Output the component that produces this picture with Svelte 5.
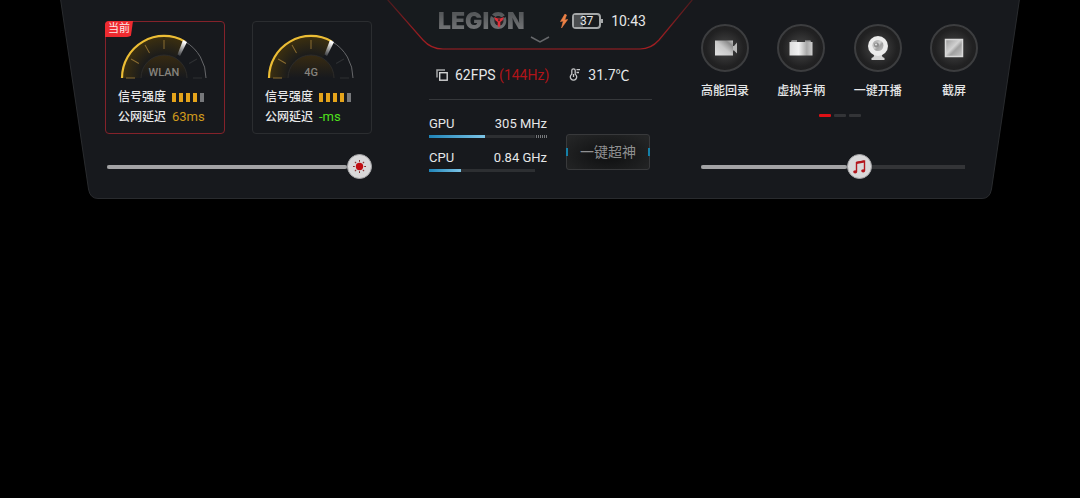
<script>
  let brightness = $state(100);
  let volume = $state(61);
  let page = $state(0);
  let current = $state(0);

  const networks = [
    { name: "WLAN", bars: 4, delay: "63ms", color: "#cf9a1c" },
    { name: "4G", bars: 4, delay: "-ms", color: "#4fe01c" },
  ];

  const meters = [
    { name: "GPU", value: "305 MHz", percent: 53, peak: true },
    { name: "CPU", value: "0.84 GHz", percent: 30, peak: false },
  ];

  const tools = [
    { label: "高能回录", icon: "camera" },
    { label: "虚拟手柄", icon: "gamepad" },
    { label: "一键开播", icon: "webcam" },
    { label: "截屏", icon: "shot" },
  ];

  // the thumb is 25px wide, so its travel is the track minus 25px
  function thumbLeft(value) {
    return `calc(${value}% - ${value / 4}px)`;
  }
</script>

<main class="panel">
  <svg class="shape" viewBox="0 0 960 199" preserveAspectRatio="none" aria-hidden="true">
    <defs>
      <linearGradient id="notchLine" x1="0" y1="0" x2="0" y2="1">
        <stop offset="0" stop-color="#4a1a1d" />
        <stop offset="0.6" stop-color="#8e1c20" />
        <stop offset="1" stop-color="#a61e22" />
      </linearGradient>
    </defs>
    <path d="M0.5 -1 L28.5 189 Q30 198.5 38 198.5 H922 Q930 198.5 931.5 189 L959.5 -1 Z" fill="#17191d" stroke="#292b2e" />
    <path d="M327 -1 L365 41 Q373 49.500 384 49.500 H583 Q594 49.500 602 41 L633 -1 Z" fill="#171b1e" />
    <path d="M327 -1 L363 40 Q371 49 383 49 H580 Q591 49 599 40 L633 -1" fill="none" stroke="url(#notchLine)" stroke-width="1.2" />
  </svg>

  <section class="left">
    <div class="cards">
      {#each networks as net, i}
        <button class="card" class:active={current === i} onclick={() => (current = i)}>
          {#if current === i}
            <span class="badge">当前</span>
          {/if}
          <svg class="gauge" viewBox="0 0 88 45" width="88" height="45">
            <defs>
              <radialGradient id="glow{i}" gradientUnits="userSpaceOnUse" cx="44" cy="44" r="42">
                <stop offset="0.5" stop-color="#17191d" />
                <stop offset="1" stop-color="#3d300f" />
              </radialGradient>
              <linearGradient id="dome{i}" x1="0" y1="0" x2="0" y2="1">
                <stop offset="0" stop-color="#382b12" />
                <stop offset="1" stop-color="#17191d" />
              </linearGradient>
              <linearGradient id="needle{i}" x1="0" y1="1" x2="0.4" y2="0">
                <stop offset="0" stop-color="#fff" stop-opacity="0.1" />
                <stop offset="1" stop-color="#fff" />
              </linearGradient>
            </defs>
            <path d="M2 44 A42 42 0 0 1 65 7.600 L44 44 Z" fill="url(#glow{i})" />
            <path d="M21 44 A23 23 0 0 1 67 44 Z" fill="url(#dome{i})" />
            <path d="M21 44 A23 23 0 0 1 67 44" fill="none" stroke="#2c2b29" />
            <path d="M65 7.600 A42 42 0 0 1 86 44" fill="none" stroke="#66676a" />
            {#each [0, 30, 60, 90, 150, 180] as angle}
              <line x1="6" y1="44" x2="15" y2="44" transform="rotate({angle} 44 44)" stroke={angle > 90 ? "#2e3033" : "#8a6c30"} />
            {/each}
            <path d="M2 44 A42 42 0 0 1 65 7.600" fill="none" stroke="#ecbd35" stroke-width="2.200" />
            <path d="M63 6 L67 8 L60 22 L57.500 20.500 Z" fill="url(#needle{i})" />
            <text x="44" y="42" text-anchor="middle">{net.name}</text>
          </svg>
          <span class="row">
            <span class="key">信号强度</span>
            <span class="bars">
              {#each [0, 1, 2, 3, 4] as n}
                <i class:on={n < net.bars}></i>
              {/each}
            </span>
          </span>
          <span class="row"><span class="key">公网延迟</span><span style:color={net.color}>{net.delay}</span></span>
        </button>
      {/each}
    </div>

    <div class="slider bright">
      <input type="range" min="0" max="100" aria-label="亮度" bind:value={brightness} />
      <span class="fill" style:width={thumbLeft(brightness)}></span>
      <svg class="knob" style:left={thumbLeft(brightness)} viewBox="0 0 25 25" width="25" height="25">
        <circle cx="12.5" cy="12.5" r="12" fill="#d9d8d9" stroke="#a2a2a4" />
        <circle cx="12.5" cy="12.5" r="3.700" fill="#c00d12" />
        {#each [0, 45, 90, 135, 180, 225, 270, 315] as angle}
          <line x1="12.5" y1="6" x2="12.5" y2="7.800" transform="rotate({angle} 12.5 12.5)" stroke="#8c2a2c" />
        {/each}
      </svg>
    </div>
  </section>

  <section class="center">
    <header>
      <h1 class="logo">
        LEGION
        <svg viewBox="0 0 18 18" width="18" height="18" aria-hidden="true">
          <circle cx="9" cy="9" r="4.500" fill="#2a2325" />
          <path d="M1 3 L9 8 L17 3" fill="none" stroke="#171b1e" stroke-width="1.500" />
          <path d="M4 5 L8 6.500 H10 L14 5 L12.500 8.500 L10.300 10 V14 L9 15.500 L7.700 14 V10 L5.500 8.500 Z" fill="#e0303a" />
          <path d="M7.800 7.500 L9 9.500 L10.200 7.500 Z" fill="#171b1e" />
        </svg>
      </h1>
      <svg class="bolt" viewBox="0 0 8 14" width="8" height="14">
        <path d="M5 0 L0.500 7.500 L3.300 7 L1.500 14 L7.700 5.500 L4.700 6 L6.500 1 Z" fill="#ee8246" stroke="#ee8246" stroke-width="0.600" />
      </svg>
      <span class="battery"><span class="level"></span><b>37</b></span>
      <time>10:43</time>
      <button class="fold" aria-label="收起">
        <svg viewBox="0 0 20 8" width="20" height="8">
          <path d="M1 1 L10 6 L19 1" fill="none" stroke="#66686b" stroke-width="1.500" />
        </svg>
      </button>
    </header>

    <div class="stats">
      <svg viewBox="0 0 12 12" width="12" height="12">
        <path d="M1 8.500 V1 H9" fill="none" stroke="#a5a6a8" stroke-width="1.500" />
        <rect x="3.700" y="3.700" width="7.500" height="7.500" fill="none" stroke="#d2d3d4" stroke-width="1.400" />
      </svg>
      <span>62FPS <em>(144Hz)</em></span>
      <svg class="temp" viewBox="0 0 12 13" width="12" height="13">
        <path d="M2.800 6.200 V2.500 A1.700 1.700 0 0 1 6.200 2.500 V6.200 A3.200 3.200 0 1 1 2.800 6.200 Z" fill="none" stroke="#c5c6c8" stroke-width="1.300" />
        <path d="M4.500 6 V9 M7.500 1.700 H11 M7.500 4.500 H10" fill="none" stroke="#c5c6c8" stroke-width="1.300" />
      </svg>
      <span>31.7℃</span>
    </div>

    <div class="load">
      <div class="meters">
        {#each meters as m}
          <div class="meter">
            <div class="names"><span>{m.name}</span><span>{m.value}</span></div>
            <div class="line">
              <div class="track"><div style:width="{m.percent}%"></div></div>
              <div class="ticks" class:peak={m.peak}></div>
            </div>
          </div>
        {/each}
      </div>
      <button class="boost">一键超神</button>
    </div>
  </section>

  <section class="right">
    <svg class="defs" width="0" height="0" aria-hidden="true">
      <defs>
        <linearGradient id="metal" x1="0" y1="1" x2="1" y2="0">
          <stop offset="0" stop-color="#e2e2e2" />
          <stop offset="0.500" stop-color="#c8c8c8" />
          <stop offset="0.800" stop-color="#8c8c8c" />
          <stop offset="1" stop-color="#c8c8c8" />
        </linearGradient>
        <linearGradient id="pad" x1="0" y1="0" x2="1" y2="0">
          <stop offset="0" stop-color="#dcdcdc" />
          <stop offset="0.400" stop-color="#f2f2f2" />
          <stop offset="0.750" stop-color="#a8a8a8" />
          <stop offset="1" stop-color="#cfcfcf" />
        </linearGradient>
        <linearGradient id="glass" x1="0" y1="0" x2="1" y2="1">
          <stop offset="0" stop-color="#989898" />
          <stop offset="0.450" stop-color="#d2d2d2" />
          <stop offset="0.600" stop-color="#a0a0a0" />
          <stop offset="1" stop-color="#c6c6c6" />
        </linearGradient>
      </defs>
    </svg>
    <div class="tools">
      {#each tools as tool}
        <button class="tool">
          <span class="disc">
            <svg viewBox="0 0 24 24" width="24" height="24">
              {#if tool.icon === "camera"}
                <rect x="2" y="4.500" width="18" height="15" fill="url(#metal)" />
                <path d="M20 10 H21 L24.500 6 V18 L21 14.500 H20 Z" fill="#b9b9b9" />
              {:else if tool.icon === "gamepad"}
                <path d="M1 6 H2.500 V4.500 H8 V6 H16 V4.500 H21.500 V6 H23.500 V19.500 H0.500 V6 Z" fill="url(#pad)" />
                <path d="M2.500 5.500 H8 M16 5.500 H21.500" stroke="#9a9a9a" />
              {:else if tool.icon === "webcam"}
                <path d="M8.500 18 H15.500 L16.500 21 L18.500 22 V24 H5.500 V22 L7.500 21 Z" fill="#d4d4d4" />
                <circle cx="12" cy="10" r="10" fill="#ececec" />
                <circle cx="12" cy="9.500" r="5.500" fill="url(#glass)" />
                <circle cx="10.500" cy="9" r="2.500" fill="#8e8e8e" />
                <circle cx="10" cy="8.500" r="1" fill="#e4e4e4" />
              {:else}
                <rect x="3.500" y="3.500" width="17" height="17" fill="url(#glass)" stroke="#d9d9d9" stroke-width="1.500" />
              {/if}
            </svg>
          </span>
          <span class="label">{tool.label}</span>
        </button>
      {/each}
    </div>

    <div class="pager">
      {#each [0, 1, 2] as n}
        <button class:on={page === n} aria-label="第{n + 1}页" onclick={() => (page = n)}></button>
      {/each}
    </div>

    <div class="slider sound">
      <input type="range" min="0" max="100" aria-label="音量" bind:value={volume} />
      <span class="fill" style:width={thumbLeft(volume)}></span>
      <svg class="knob" style:left={thumbLeft(volume)} viewBox="0 0 25 25" width="25" height="25">
        <circle cx="12.5" cy="12.5" r="12" fill="#d9d8d9" stroke="#a2a2a4" />
        <path d="M9.500 17.500 V8.500 L17.500 7 V16.500" fill="none" stroke="#b3151c" stroke-width="1.400" />
        <path d="M9.500 8.800 L17.500 7.300" stroke="#b3151c" stroke-width="2.200" />
        <ellipse cx="8.200" cy="17.800" rx="2" ry="1.600" fill="#b3151c" />
        <ellipse cx="16.200" cy="16.800" rx="2" ry="1.600" fill="#b3151c" />
      </svg>
    </div>
  </section>
</main>

<style>
  :global(body) {
    background: #000;
  }

  .panel {
    position: relative;
    display: grid;
    grid-template-columns: 267fr 231fr 277fr;
    column-gap: 49px;
    box-sizing: border-box;
    margin: 0 60px;
    padding: 0 42px 20px 45px;
    color: #e6e7e8;
    font-family: Roboto, "Noto Sans CJK SC", sans-serif;
    font-size: 13px;
    line-height: 20px;
  }

  .shape {
    position: absolute;
    top: 0;
    left: 0;
    width: 100%;
    height: 100%;
  }

  section {
    position: relative;
  }

  button {
    margin: 0;
    padding: 0;
    border: none;
    background: none;
    color: inherit;
    font: inherit;
    cursor: pointer;
  }

  svg {
    display: block;
    flex: none;
  }

  .left {
    padding-top: 21px;
  }

  .cards {
    display: flex;
    justify-content: space-between;
  }

  .card {
    position: relative;
    box-sizing: border-box;
    width: 120px;
    padding: 12px 0 6px 12px;
    border: 1px solid #2b2d30;
    border-radius: 4px;
    text-align: left;
  }

  .card.active {
    border-color: #84222a;
  }

  .badge {
    position: absolute;
    top: -1px;
    left: -1px;
    width: 28px;
    border-radius: 4px 0 6px 0;
    background: #ee2b30;
    clip-path: polygon(0 0, 100% 0, 92% 100%, 0 100%);
    color: #fbe9e9;
    font-size: 11px;
    line-height: 16px;
    text-indent: 3px;
  }

  .gauge {
    margin: 0 0 8px 2px;
  }

  .gauge text {
    fill: #85837e;
    font-size: 11px;
    font-weight: 500;
  }

  .row {
    display: flex;
    align-items: center;
    gap: 5px;
    white-space: nowrap;
  }

  .key,
  .label {
    font-size: 12px;
    font-weight: 500;
  }

  .key {
    width: 49px;
  }

  .bars {
    display: flex;
    gap: 3px;
  }

  .bars i {
    width: 4px;
    height: 9px;
    background: #77787b;
  }

  .bars i.on {
    background: #e5a41b;
  }

  .slider {
    position: relative;
    height: 25px;
  }

  .bright {
    margin-top: 20px;
    margin-left: 2px;
  }

  .sound {
    margin-top: 37px;
    margin-right: 13px;
  }

  .slider input {
    display: block;
    width: 100%;
    height: 25px;
    margin: 0;
    appearance: none;
    background: linear-gradient(#333437, #333437) center / 100% 4px no-repeat;
    cursor: pointer;
  }

  .slider input::-webkit-slider-thumb {
    appearance: none;
    width: 25px;
    height: 25px;
    background: transparent;
  }

  .fill {
    position: absolute;
    top: 11px;
    left: 0;
    height: 4px;
    border-radius: 2px;
    background: #a3a3a5;
    pointer-events: none;
  }

  .knob {
    position: absolute;
    top: 0;
    pointer-events: none;
  }

  .center {
    padding-left: 8px;
  }

  header {
    position: relative;
    display: flex;
    align-items: center;
    box-sizing: border-box;
    height: 50px;
    padding: 0 6px 8px 9px;
  }

  .logo {
    position: relative;
    margin: 0 auto 0 0;
    background: linear-gradient(#55585a 20%, #707274 80%);
    background-clip: text;
    color: transparent;
    font-family: Inter, "Open Sans", sans-serif;
    font-size: 23px;
    font-weight: 900;
    line-height: 24px;
  }

  .logo svg {
    position: absolute;
    top: 3px;
    right: 17px;
  }

  .battery {
    position: relative;
    box-sizing: border-box;
    width: 29px;
    height: 16px;
    margin: 0 10px 0 4px;
    border: 2px solid #a4a7a8;
    border-radius: 4px;
    line-height: 12px;
    text-align: center;
  }

  .battery::after {
    content: "";
    position: absolute;
    top: 4px;
    right: -4px;
    width: 2px;
    height: 4px;
    background: #a4a7a8;
  }

  .battery b {
    position: relative;
    font-size: 12px;
    font-weight: 400;
  }

  .level {
    position: absolute;
    top: 0;
    bottom: 0;
    left: 0;
    width: 37%;
    background: #4b4e50;
  }

  time,
  .stats {
    font-size: 14px;
  }

  .fold {
    position: absolute;
    bottom: 6px;
    left: 101px;
  }

  .stats {
    display: flex;
    align-items: center;
    gap: 7px;
    height: 49px;
    padding-left: 7px;
    border-bottom: 1px solid #36383b;
    white-space: nowrap;
  }

  .stats em {
    color: #b01419;
    font-style: normal;
  }

  .temp {
    margin-left: 13px;
  }

  .load {
    display: flex;
    align-items: flex-end;
    gap: 19px;
    padding: 16px 2px 0 0;
  }

  .meters {
    flex: 1;
    display: flex;
    flex-direction: column;
    gap: 12px;
  }

  .names {
    display: flex;
    justify-content: space-between;
    line-height: 16px;
    white-space: nowrap;
  }

  .line {
    display: flex;
    gap: 1px;
    height: 3px;
    margin-top: 3px;
  }

  .track {
    flex: 1;
    background: #2d2f32;
  }

  .track div {
    height: 100%;
    background: linear-gradient(90deg, #1f84b8, #7cc4e6);
  }

  .ticks {
    width: 11px;
  }

  .ticks.peak {
    background: repeating-linear-gradient(90deg, #77797c 0 1px, transparent 1px 2px);
  }

  .boost {
    position: relative;
    box-sizing: border-box;
    width: 84px;
    height: 36px;
    margin-bottom: 2px;
    border: 1px solid #38393b;
    border-radius: 3px;
    background: radial-gradient(ellipse at 50% 60%, #131415 20%, #242526 90%);
    color: #8f9091;
    font-size: 14px;
    white-space: nowrap;
  }

  .boost::before,
  .boost::after {
    content: "";
    position: absolute;
    top: 13px;
    left: -1px;
    width: 2px;
    height: 8px;
    background: #1580a8;
  }

  .boost::after {
    right: -1px;
    left: auto;
  }

  .right {
    padding-top: 24px;
  }

  .defs {
    position: absolute;
  }

  .tools {
    display: flex;
    justify-content: space-between;
  }

  .tool {
    display: flex;
    flex-direction: column;
    align-items: center;
    gap: 9px;
    width: 48px;
    white-space: nowrap;
  }

  .disc {
    display: flex;
    align-items: center;
    justify-content: center;
    box-sizing: border-box;
    width: 48px;
    height: 48px;
    border: 2px solid #3c3d3f;
    border-radius: 50%;
    background: radial-gradient(circle, #484848, #212122 60%, #1c1c1d);
  }

  .pager {
    display: flex;
    justify-content: center;
    gap: 3px;
    margin-top: 13px;
  }

  .pager button {
    width: 12px;
    height: 3px;
    border-radius: 1px;
    background: #333437;
  }

  .pager button.on {
    background: #dd1015;
  }
</style>
